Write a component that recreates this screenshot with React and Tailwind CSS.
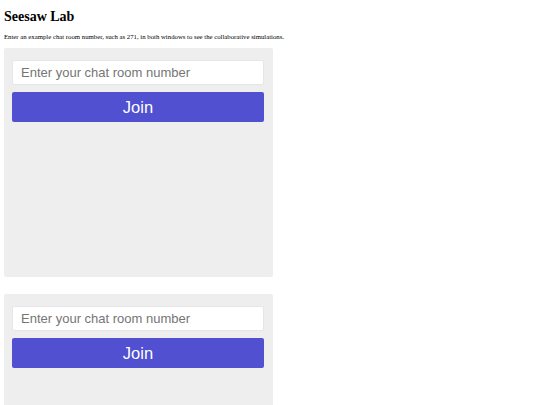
import React from 'react';

const RoomPanel = ({ height }) => (
    <div className={`w-[269px] ${height} bg-[#eeeeee] rounded-[2px] px-2 pt-3 flex flex-col gap-[7px]`}>
        <input
            type="text"
            placeholder="Enter your chat room number"
            className="w-[252px] h-[25px] bg-white border border-[#e6e6e6] rounded-[2px] px-2 text-[13px] text-[#333] placeholder:text-[#757575] outline-none font-['Liberation_Sans',Arial,sans-serif]"
        />
        <button className="w-[252px] h-[30px] bg-[#5050d0] rounded-[2px] text-white text-[16.5px] leading-none font-['Liberation_Sans',Arial,sans-serif]">
            Join
        </button>
    </div>
);

const App = () => {
    return (
        <div className="h-[405px] bg-white px-1 font-['Liberation_Serif','Times_New_Roman',serif] text-black overflow-hidden">
            <h1 className="text-[14px] font-bold leading-none pt-[10px]">Seesaw Lab</h1>
            <p className="text-[6.75px] leading-none mt-[10px] whitespace-nowrap">
                Enter an example chat room number, such as 271, in both windows to see the collaborative simulations.
            </p>
            <div className="mt-[7px] flex flex-col gap-[17px]">
                <RoomPanel height="h-[229px]" />
                <RoomPanel height="h-[229px]" />
            </div>
        </div>
    );
};

export default App;
